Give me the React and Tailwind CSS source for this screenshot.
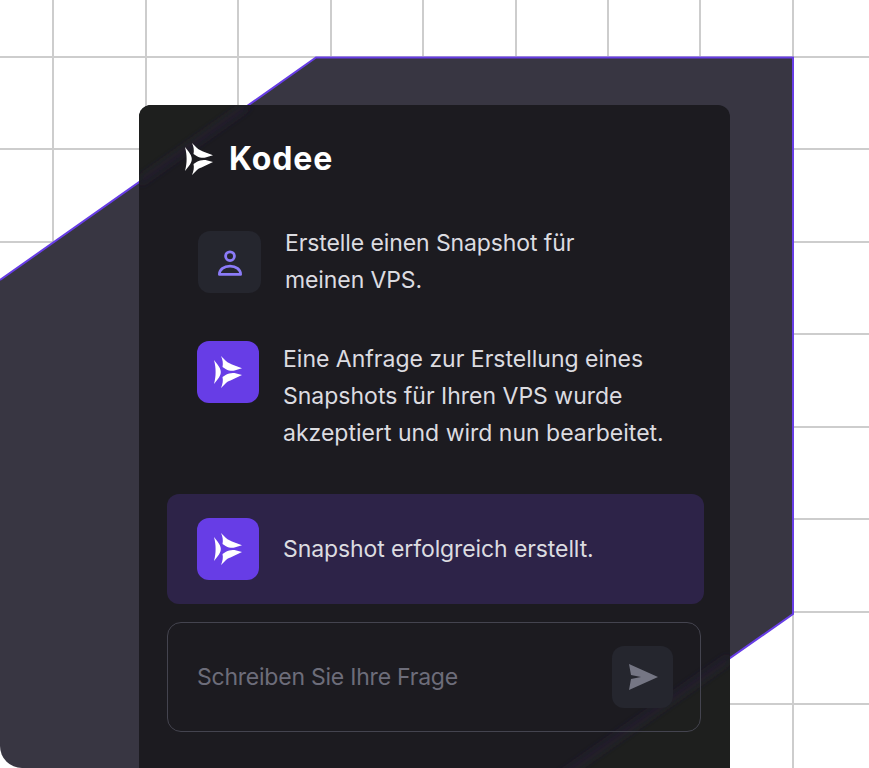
const Logo = ({ className }) => (
  <svg viewBox="0 0 28 32" className={className} fill="currentColor">
    <path d="M0 4 L3.500 8.500 C5.500 11 6.800 13.500 6.800 16 C6.800 18.500 5.500 21 3.500 23.500 L0 28 C1.200 23.500 1.600 20 1.600 16 C1.600 12 1.200 8.500 0 4Z" />
    <path d="M7 0 L12 5 C14 6.800 16 7.600 18 8.500 L28 12.200 L20.500 14.600 C17.500 15.300 14.500 14.500 12 13.200 L8.500 11 C9.300 7.500 8.700 3.500 7 0Z" />
    <path d="M28 19 L20.500 17 C17.500 16.600 14.500 17.300 12 18.800 L8.500 21 C9.300 24.500 8.700 28 7 32 L12 27 C14 25.200 16 24.700 18 23.800Z" />
  </svg>
)

function KodeeAvatar() {
  return (
    <div className="flex h-[62px] w-[62px] shrink-0 items-center justify-center rounded-[12px] bg-[#673de6] text-white">
      <Logo className="h-[32px] w-[28px]" />
    </div>
  )
}

function Backdrop() {
  const lines = [53, 146, 238, 331, 423, 516, 608, 700, 793]
  const rows = [57, 149, 242, 334, 427, 519, 612, 704]
  return (
    <svg className="absolute inset-0 h-[768px] w-[869px]" viewBox="0 0 869 768">
      {lines.map(x => <rect key={x} x={x - 1} y="0" width="2" height="768" fill="#cdcdcd" />)}
      {rows.map(y => <rect key={y} x="0" y={y - 1} width="869" height="2" fill="#cdcdcd" />)}
      <path d="M0 280 L316 57.500 H793 V614 L573 768 H22 A22 22 0 0 1 0 746Z" fill="#383642" />
      <path d="M0 280 L316 57.500 H793 V614 L573 768" fill="none" stroke="#673de6" strokeWidth="2" />
    </svg>
  )
}

function CardTint() {
  return (
    <svg className="absolute inset-0 h-full w-full" viewBox="139 105 591 680" preserveAspectRatio="xMinYMin slice">
      <defs>
        <filter id="soft" filterUnits="userSpaceOnUse" x="100" y="60" width="680" height="760">
          <feGaussianBlur stdDeviation="4" />
        </filter>
      </defs>
      <path d="M139 105 H248 L139 182Z M730 658 V785 H549Z" fill="#1e1f1e" />
      <path d="M139 182 L248 105 M730 658 L549 785" stroke="#2a2240" strokeOpacity="0.7" strokeWidth="5" fill="none" filter="url(#soft)" />
    </svg>
  )
}

export default function App() {
  return (
    <div className="relative h-[768px] w-[869px] overflow-hidden bg-white" style={{ fontFamily: 'Inter, sans-serif' }}>
      <Backdrop />
      <div className="relative ml-[139px] mt-[105px] h-[680px] w-[591px] overflow-hidden rounded-[12px] bg-[#1c1b20]">
        <CardTint />
        <div className="relative flex flex-col">
          <div className="ml-[46px] mt-[38px] flex items-center gap-[16px] text-white">
            <Logo className="h-[32px] w-[28px]" />
            <span className="text-[32px] font-bold leading-[32px] tracking-[0.9px]">Kodee</span>
          </div>

          <div className="ml-[59px] mt-[50px] flex items-center gap-[24px]">
            <div className="flex h-[62px] w-[63px] shrink-0 items-center justify-center rounded-[12px] bg-[#25262e]">
              <svg viewBox="0 0 28 27" className="h-[27px] w-[28px]" fill="none" stroke="#8b7bf7" strokeWidth="2.800" strokeLinejoin="round">
                <circle cx="14" cy="7.200" r="4.400" />
                <path d="M3.400 25.400 C3.400 20.500 8 17.200 14 17.200 C20 17.200 24.600 20.500 24.600 25.400Z" />
              </svg>
            </div>
            <p className="text-[23px] leading-[37px] tracking-[-0.1px] text-[#dcdce0]">Erstelle einen Snapshot für<br />meinen VPS.</p>
          </div>

          <div className="ml-[58px] mt-[42px] flex items-start gap-[24px]">
            <KodeeAvatar />
            <p className="text-[23px] leading-[37px] text-[#dcdce0]">
              Eine Anfrage zur Erstellung eines<br />Snapshots für Ihren VPS wurde<br />akzeptiert und wird nun bearbeitet.
            </p>
          </div>

          <div className="ml-[28px] mt-[42px] flex h-[110px] w-[537px] items-center gap-[24px] rounded-[12px] bg-[#2d2348] pl-[30px]">
            <KodeeAvatar />
            <p className="text-[23px] leading-[37px] tracking-[-0.1px] text-[#dcdce0]">Snapshot erfolgreich erstellt.</p>
          </div>

          <div className="ml-[28px] mt-[18px] flex h-[110px] w-[534px] items-center justify-between rounded-[14px] border-[1.5px] border-[#44444f] pl-[29px] pr-[27px]">
            <span className="text-[23px] tracking-[-0.23px] text-[#6d6d7a]">Schreiben Sie Ihre Frage</span>
            <div className="flex h-[62px] w-[61px] items-center justify-center rounded-[12px] bg-[#25262e] pl-[3px]">
              <svg viewBox="0 0 30 26" className="h-[26px] w-[30px]" fill="#757684">
                <path d="M0 0 L29 13 L0 26 L2 15 L12 13 L2 11Z" />
              </svg>
            </div>
          </div>
        </div>
      </div>
    </div>
  )
}
